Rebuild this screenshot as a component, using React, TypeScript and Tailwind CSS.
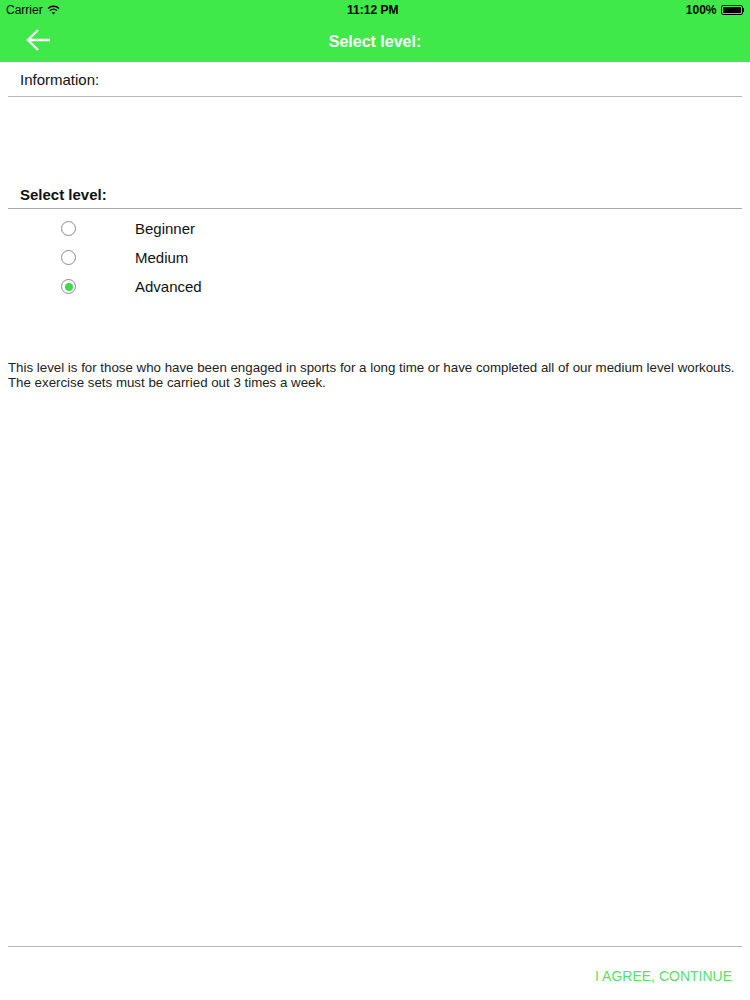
import { useState } from "react";

const levels = [
  { name: "Beginner", info: [] as string[] },
  { name: "Medium", info: [] as string[] },
  {
    name: "Advanced",
    info: [
      "This level is for those who have been engaged in sports for a long time or have completed all of our medium level workouts.",
      "The exercise sets must be carried out 3 times a week.",
    ],
  },
];

const App = () => {
  const [selected, setSelected] = useState("Advanced");
  const current = levels.find((l) => l.name === selected);

  return (
    <div
      className="w-[750px] h-[1000px] bg-white flex flex-col text-[#111]"
      style={{ fontFamily: '"Liberation Sans", Arial, sans-serif' }}
    >
      <div className="bg-[#40e94a] h-[62px] flex flex-col">
        <div className="h-[20px] flex items-center justify-between px-[6px] text-[12px] text-black">
          <div className="flex items-center gap-1">
            <span>Carrier</span>
            <svg width="13" height="10" viewBox="0 0 13 10">
              <path d="M1 3.5a8 8 0 0 1 11 0" stroke="black" strokeWidth="1.4" fill="none" />
              <path d="M3 5.7a5 5 0 0 1 7 0" stroke="black" strokeWidth="1.4" fill="none" />
              <path d="M6.5 9.5 4.9 7.7a2.3 2.3 0 0 1 3.2 0z" fill="black" />
            </svg>
          </div>
          <span className="font-bold">11:12 PM</span>
          <div className="flex items-center gap-1">
            <span className="font-bold">100%</span>
            <div className="flex items-center">
              <div className="w-[22px] h-[10px] border border-black rounded-[2px] p-[1px]">
                <div className="w-full h-full bg-black rounded-[1px]" />
              </div>
              <div className="w-[1.5px] h-[4px] bg-black" />
            </div>
          </div>
        </div>
        <div className="flex-1 flex items-center relative">
          <button className="absolute left-[26px] top-[8px]">
            <svg width="26" height="24" viewBox="0 0 26 24">
              <path d="M24 12H3M12 2 2 12l10 10" stroke="white" strokeWidth="2.4" fill="none" />
            </svg>
          </button>
          <div className="w-full text-center text-white text-[16px] font-bold pt-[2px]">Select level:</div>
        </div>
      </div>

      <div className="px-[8px]">
        <div className="pl-[12px] pt-[10px] pb-[8px] text-[15px] leading-[16px]">Information:</div>
        <div className="h-px bg-[#b8b8b8]" />
      </div>

      <div className="px-[8px] mt-[90px]">
        <div className="pl-[12px] pb-[5px] text-[15px] leading-[16px] font-bold">Select level:</div>
        <div className="h-px bg-[#a8a8a8]" />
      </div>

      <div className="flex flex-col pt-[5px]">
        {levels.map((l) => {
          const on = l.name === selected;
          return (
            <div
              key={l.name}
              onClick={() => setSelected(l.name)}
              className="h-[29px] flex items-center cursor-pointer"
            >
              <div className="ml-[61px] w-[15px] h-[15px] rounded-full border border-[#8a8a8a] flex items-center justify-center">
                {on && <div className="w-[8px] h-[8px] rounded-full bg-[#3fd94a]" />}
              </div>
              <span className="ml-[59px] text-[15px] pt-[2px]">{l.name}</span>
            </div>
          );
        })}
      </div>

      <div className="px-[8px] mt-[59px] text-[13.3px] leading-[15px] text-[#222]">
        {current?.info.map((line) => (
          <p key={line}>{line}</p>
        ))}
      </div>

      <div className="flex-1" />

      <div className="px-[8px]">
        <div className="h-px bg-[#b8b8b8]" />
      </div>
      <div className="h-[53px] flex justify-end items-center pr-[18px]">
        <button className="text-[14px] text-[#5cdc6a] pt-[6px]">I AGREE, CONTINUE</button>
      </div>
    </div>
  );
};

export default App;
